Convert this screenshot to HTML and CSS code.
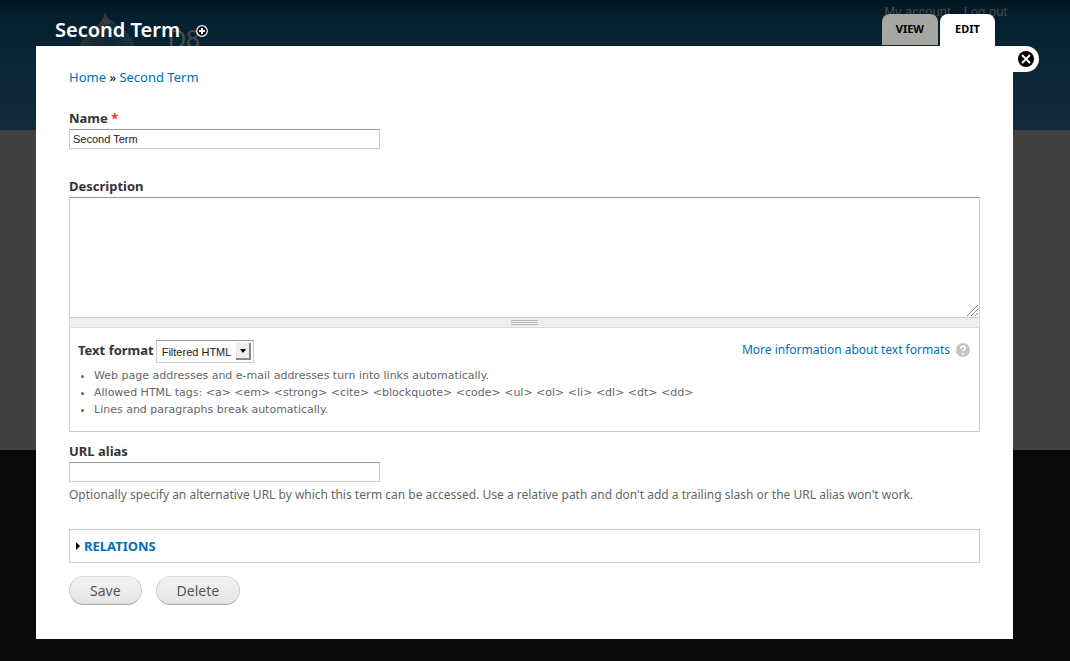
FILE: index.html
```
<!DOCTYPE html>
<html lang="en">
<head>
  <meta charset="UTF-8">
  <meta name="viewport" content="width=device-width, initial-scale=1.0">
  <title>Second Term | D8</title>
  <link rel="stylesheet" href="styles.css">
</head>
<body>

  <!-- Dimmed site behind the overlay -->
  <div class="site">
    <div class="site-header">
      <svg class="site-logo" width="64" height="76" viewBox="0 0 64 76" aria-hidden="true">
        <defs>
          <linearGradient id="drop" x1="0" y1="0.2" x2="1" y2="0.3">
            <stop offset="0" stop-color="#25313a"/>
            <stop offset="0.3" stop-color="#1c2c36"/>
            <stop offset="0.6" stop-color="#0d2938"/>
            <stop offset="1" stop-color="#1c3340"/>
          </linearGradient>
        </defs>
        <path d="M30 0C31 5 34 8 40 11C53 18 61 30 61 44C61 62 48 74 32 74C16 74 3 62 3 45C3 32 9 23 19 16C26 11 29 7 30 0Z" fill="url(#drop)"/>
        <path d="M30 0C31 5 34 8 40 11C35 11 28 13 20 18C17 20 14 23 12 25C14 21 16 18 19 16C26 11 29 7 30 0Z" fill="#36393b"/>
      </svg>
      <span class="site-name">D8</span>
      <nav class="user-menu">
        <a href="#">My account</a>
        <a href="#">Log out</a>
      </nav>
    </div>
    <div class="site-main"></div>
    <div class="site-footer"></div>
  </div>

  <!-- Overlay -->
  <div class="overlay">
    <div class="overlay-titlebar">
      <h1 class="overlay-title">Second Term</h1>
      <button type="button" class="shortcut" aria-label="Add to shortcuts">
        <svg width="12" height="12" viewBox="0 0 12 12">
          <circle cx="6" cy="6" r="5.3" fill="#000" stroke="#fff" stroke-width="1.2"/>
          <path d="M6 3v6M3 6h6" stroke="#fff" stroke-width="2"/>
        </svg>
      </button>
      <nav class="tabs">
        <a class="tab" href="#">VIEW</a>
        <a class="tab active" href="#">EDIT</a>
      </nav>
    </div>

    <div class="panel">
      <button type="button" class="close" aria-label="Close overlay">
        <svg width="16" height="16" viewBox="0 0 16 16">
          <circle cx="8" cy="8" r="8" fill="#000"/>
          <path d="M4 4l8 8M12 4l-8 8" stroke="#fff" stroke-width="2"/>
        </svg>
      </button>

      <div class="breadcrumb"><a href="#">Home</a> » <a href="#">Second Term</a></div>

      <form>
        <div class="form-item name-item">
          <label for="name">Name <span class="required">*</span></label>
          <input type="text" id="name" value="Second Term">
        </div>

        <div class="form-item">
          <label for="description">Description</label>
          <div class="textarea-wrapper">
            <textarea id="description"></textarea>
            <svg class="resizer" width="11" height="11" viewBox="0 0 11 11" aria-hidden="true">
              <path d="M0 11L11 0M4 11L11 4M8 11L11 8" stroke="#888" stroke-width="1"/>
            </svg>
          </div>
          <div class="grippie"><span></span></div>
          <div class="format-box">
            <div class="format-row">
              <label for="format">Text format</label>
              <div class="select-wrapper">
                <select id="format">
                  <option>Filtered HTML</option>
                </select>
                <span class="arrow"></span>
              </div>
              <a class="format-help" href="#">More information about text formats
                <svg width="14" height="14" viewBox="0 0 14 14" aria-hidden="true">
                  <circle cx="7" cy="7" r="7" fill="#c4c4c4"/>
                  <path d="M4.7 5.4C4.7 2.5 9.4 2.6 9.4 5.1C9.4 6.8 7.1 6.7 7.1 8.6" fill="none" stroke="#fff" stroke-width="1.7"/>
                  <path d="M6.2 9.8h1.8v1.8h-1.8z" fill="#fff"/>
                </svg>
              </a>
            </div>
            <ul class="tips">
              <li>Web page addresses and e-mail addresses turn into links automatically.</li>
              <li>Allowed HTML tags: &lt;a&gt; &lt;em&gt; &lt;strong&gt; &lt;cite&gt; &lt;blockquote&gt; &lt;code&gt; &lt;ul&gt; &lt;ol&gt; &lt;li&gt; &lt;dl&gt; &lt;dt&gt; &lt;dd&gt;</li>
              <li>Lines and paragraphs break automatically.</li>
            </ul>
          </div>
        </div>

        <div class="form-item alias-item">
          <label for="alias">URL alias</label>
          <input type="text" id="alias">
          <div class="help">Optionally specify an alternative URL by which this term can be accessed. Use a relative path and don't add a trailing slash or the URL alias won't work.</div>
        </div>

        <div class="relations">
          <svg width="4" height="8" viewBox="0 0 4 8" aria-hidden="true"><path d="M0 0l4 4l-4 4z" fill="#000"/></svg>
          <a href="#">RELATIONS</a>
        </div>

        <div class="actions">
          <button type="submit">Save</button>
          <button type="button">Delete</button>
        </div>
      </form>
    </div>
  </div>

</body>
</html>
```
FILE: styles.css
```
* {
  box-sizing: border-box;
}

body {
  margin: 0;
  min-height: 100vh;
  position: relative;
  background: #0a0a0a;
  color: #333;
  font: 13px/18px "Noto Sans", sans-serif;
}

a {
  color: #0071b8;
  text-decoration: none;
}

button {
  font-family: inherit;
  cursor: pointer;
}

svg {
  display: block;
}

/* Site behind */
.site {
  position: absolute;
  top: 0;
  left: 0;
  right: 0;
  bottom: 0;
  overflow: hidden;
}

.site-header {
  display: flex;
  align-items: flex-start;
  height: 130px;
  padding: 12px 63px 0 75px;
  background: linear-gradient(#021622 0, #04202f 20px, #0a2636 60px, #142b39 100%);
  font-family: "Liberation Sans", Arial, sans-serif;
}

.site-name {
  margin: 13px 0 0 29px;
  color: #494b4d;
  font-size: 25px;
  line-height: 28px;
}

.user-menu {
  display: flex;
  gap: 13px;
  margin: -9px 0 0 auto;
  font-size: 13px;
}

.user-menu a {
  color: #494b4d;
}

.site-main {
  height: 320px;
  background: #404040;
}

/* Overlay */
.overlay {
  position: relative;
  padding: 0 57px 22px 36px;
}

.overlay-titlebar {
  display: flex;
  align-items: center;
  height: 46px;
  padding: 14px 18px 0 19px;
}

.overlay-title {
  margin: 0;
  color: #fff;
  font-size: 20px;
  font-weight: 600;
  line-height: 32px;
}

.shortcut {
  margin: 2px 0 0 16px;
  padding: 0;
  border: 0;
  background: none;
}

.tabs {
  display: flex;
  align-items: flex-start;
  gap: 2px;
  margin-left: auto;
}

.tab {
  min-width: 55px;
  height: 31px;
  padding: 0 14px;
  border-radius: 8px 8px 0 0;
  background: #a6a7a2;
  color: #000;
  font-size: 11px;
  font-weight: bold;
  line-height: 30px;
  text-align: center;
}

.tab.active {
  height: 32px;
  background: #fff;
}

.panel {
  position: relative;
  padding: 22px 33px 34px;
  background: #fff;
}

.close {
  position: absolute;
  top: 0;
  left: 100%;
  width: 26px;
  height: 26px;
  padding: 5px;
  border: 0;
  border-radius: 0 13px 13px 0;
  background: #fff;
}

.breadcrumb {
  margin-bottom: 23px;
  color: #000;
}

/* Form */
label {
  display: block;
  margin-bottom: 2px;
  font-weight: bold;
}

.required {
  color: #f32;
}

.name-item {
  margin-bottom: 28px;
}

input[type="text"],
textarea,
select {
  border: 1px solid #ccc;
  border-top-color: #999;
  border-radius: 0;
  background: #fff;
  color: #222;
  font: 11px "Liberation Sans", Arial, sans-serif;
  outline: none;
}

input[type="text"] {
  display: block;
  width: 311px;
  max-width: 100%;
  height: 20px;
  padding: 0 3px;
}

.textarea-wrapper {
  position: relative;
}

textarea {
  display: block;
  width: 100%;
  height: 121px;
  padding: 3px;
  resize: none;
}

.resizer {
  position: absolute;
  right: 2px;
  bottom: 2px;
}

.grippie {
  display: flex;
  justify-content: center;
  height: 10px;
  padding-top: 2px;
  border: 1px solid #ddd;
  border-top: 0;
  background: #eee;
}

.grippie span {
  width: 27px;
  height: 5px;
  background: repeating-linear-gradient(#bbb 0, #bbb 1px, #eee 1px, #eee 2px);
}

.format-box {
  margin-bottom: 10px;
  padding: 12px 9px 13px 8px;
  border: 1px solid #ccc;
  border-top: 0;
}

.format-row {
  display: flex;
  align-items: flex-start;
}

.format-row label {
  margin: 0 2px 0 0;
  line-height: 20px;
}

.select-wrapper {
  position: relative;
}

select {
  display: block;
  appearance: none;
  width: 98px;
  height: 23px;
  padding: 0 18px 0 5px;
}

.arrow {
  position: absolute;
  top: 3px;
  right: 3px;
  width: 15px;
  height: 17px;
  border: solid #888;
  border-width: 0 2px 2px 0;
  background: #eee;
  pointer-events: none;
}

.arrow::after {
  content: "";
  position: absolute;
  top: 6px;
  left: 4px;
  border: solid transparent;
  border-width: 4px 3px 0;
  border-top-color: #000;
}

.format-help {
  display: flex;
  align-items: center;
  gap: 6px;
  margin-left: auto;
  font-size: 12px;
  line-height: 20px;
}

.tips {
  margin: 4px 0 0;
  padding-left: 16px;
  color: #666;
  font: 11px/17px "DejaVu Sans", sans-serif;
}

.help {
  margin-top: 4px;
  color: #666;
  font-size: 12px;
}

.alias-item {
  margin-bottom: 25px;
}

.relations {
  display: flex;
  align-items: center;
  gap: 4px;
  height: 34px;
  padding: 0 6px;
  border: 1px solid #ccc;
  font-weight: bold;
}

.actions {
  display: flex;
  gap: 14px;
  margin-top: 13px;
}

.actions button {
  height: 29px;
  padding: 0 20px;
  border: 1px solid #ccc;
  border-color: #ddd #ccc #aaa;
  border-radius: 15px;
  background: linear-gradient(#f3f3f3, #e4e4e4);
  color: #555;
  font-size: 14px;
}
```
